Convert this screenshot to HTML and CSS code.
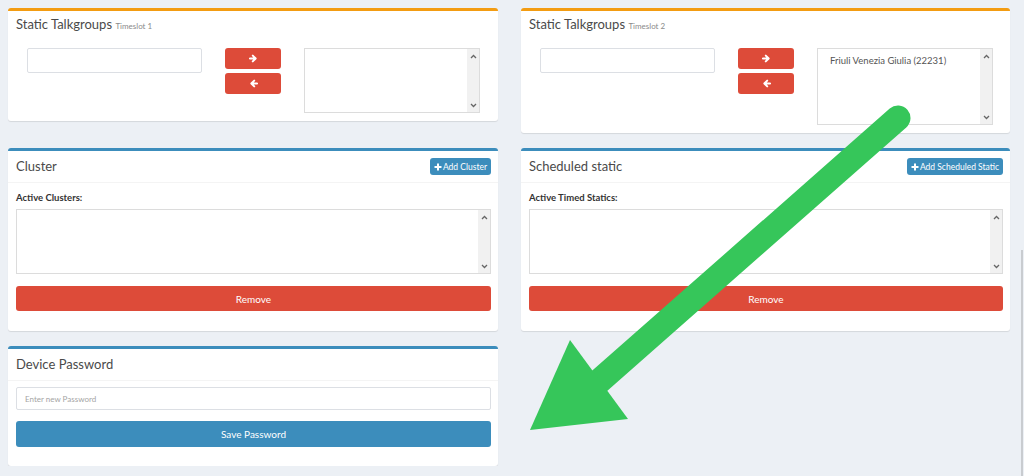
FILE: index.html
```html
<!DOCTYPE html>
<html lang="en">
<head>
	<meta charset="UTF-8">
	<title>Device settings</title>
	<link rel="stylesheet" href="styles.css">
</head>
<body>

	<div class="content">

		<div class="box box-warning">
			<div class="box-header">
				<h3 class="box-title">Static Talkgroups <small>Timeslot 1</small></h3>
			</div>
			<div class="box-body">
				<div class="tg-row">
					<input type="text" class="form-control tg-input">
					<div class="tg-buttons">
						<button class="btn btn-danger btn-arrow"><svg width="9" height="9" viewBox="0 0 10 10"><path d="M1 5h6M4.2 1.8L7.4 5 4.2 8.2" fill="none" stroke="#fff" stroke-width="2.2" stroke-linecap="round" stroke-linejoin="round"/></svg></button>
						<button class="btn btn-danger btn-arrow"><svg width="9" height="9" viewBox="0 0 10 10"><path d="M9 5H3M5.8 1.8L2.6 5l3.2 3.2" fill="none" stroke="#fff" stroke-width="2.2" stroke-linecap="round" stroke-linejoin="round"/></svg></button>
					</div>
					<div class="listbox lb-small">
						<div class="lb-items"></div>
						<div class="lb-track">
							<svg width="7" height="5" viewBox="0 0 7 5"><path d="M1 4l2.5-2.5L6 4" fill="none" stroke="#666" stroke-width="1.3"/></svg>
							<svg width="7" height="5" viewBox="0 0 7 5"><path d="M1 1l2.5 2.5L6 1" fill="none" stroke="#666" stroke-width="1.3"/></svg>
						</div>
					</div>
				</div>
			</div>
		</div>

		<div class="box box-warning">
			<div class="box-header">
				<h3 class="box-title">Static Talkgroups <small>Timeslot 2</small></h3>
			</div>
			<div class="box-body">
				<div class="tg-row">
					<input type="text" class="form-control tg-input">
					<div class="tg-buttons">
						<button class="btn btn-danger btn-arrow"><svg width="9" height="9" viewBox="0 0 10 10"><path d="M1 5h6M4.2 1.8L7.4 5 4.2 8.2" fill="none" stroke="#fff" stroke-width="2.2" stroke-linecap="round" stroke-linejoin="round"/></svg></button>
						<button class="btn btn-danger btn-arrow"><svg width="9" height="9" viewBox="0 0 10 10"><path d="M9 5H3M5.8 1.8L2.6 5l3.2 3.2" fill="none" stroke="#fff" stroke-width="2.2" stroke-linecap="round" stroke-linejoin="round"/></svg></button>
					</div>
					<div class="listbox lb-tall">
						<div class="lb-items">
							<div class="lb-option">Friuli Venezia Giulia (22231)</div>
						</div>
						<div class="lb-track">
							<svg width="7" height="5" viewBox="0 0 7 5"><path d="M1 4l2.5-2.5L6 4" fill="none" stroke="#666" stroke-width="1.3"/></svg>
							<svg width="7" height="5" viewBox="0 0 7 5"><path d="M1 1l2.5 2.5L6 1" fill="none" stroke="#666" stroke-width="1.3"/></svg>
						</div>
					</div>
				</div>
			</div>
		</div>

		<div class="box box-primary">
			<div class="box-header with-border">
				<h3 class="box-title">Cluster</h3>
				<button class="btn btn-primary btn-xs"><svg width="8" height="8" viewBox="0 0 8 8"><path d="M4 0.5v7M0.5 4h7" stroke="#fff" stroke-width="2"/></svg>Add Cluster</button>
			</div>
			<div class="box-body list-body">
				<label class="list-label">Active Clusters:</label>
				<div class="listbox lb-wide">
					<div class="lb-items"></div>
					<div class="lb-track">
						<svg width="7" height="5" viewBox="0 0 7 5"><path d="M1 4l2.5-2.5L6 4" fill="none" stroke="#666" stroke-width="1.3"/></svg>
						<svg width="7" height="5" viewBox="0 0 7 5"><path d="M1 1l2.5 2.5L6 1" fill="none" stroke="#666" stroke-width="1.3"/></svg>
					</div>
				</div>
				<button class="btn btn-danger btn-block">Remove</button>
			</div>
		</div>

		<div class="box box-primary">
			<div class="box-header with-border">
				<h3 class="box-title">Scheduled static</h3>
				<button class="btn btn-primary btn-xs"><svg width="8" height="8" viewBox="0 0 8 8"><path d="M4 0.5v7M0.5 4h7" stroke="#fff" stroke-width="2"/></svg>Add Scheduled Static</button>
			</div>
			<div class="box-body list-body">
				<label class="list-label">Active Timed Statics:</label>
				<div class="listbox lb-wide">
					<div class="lb-items"></div>
					<div class="lb-track">
						<svg width="7" height="5" viewBox="0 0 7 5"><path d="M1 4l2.5-2.5L6 4" fill="none" stroke="#666" stroke-width="1.3"/></svg>
						<svg width="7" height="5" viewBox="0 0 7 5"><path d="M1 1l2.5 2.5L6 1" fill="none" stroke="#666" stroke-width="1.3"/></svg>
					</div>
				</div>
				<button class="btn btn-danger btn-block">Remove</button>
			</div>
		</div>

		<div class="box box-primary">
			<div class="box-header with-border">
				<h3 class="box-title">Device Password</h3>
			</div>
			<div class="box-body">
				<input type="password" class="form-control pw-input" placeholder="Enter new Password">
				<button class="btn btn-primary btn-block btn-save">Save Password</button>
			</div>
		</div>

	</div>

	<div class="scroll-edge"></div>

	<!-- annotation arrow drawn over the page -->
	<svg class="annotation" width="1024" height="476" viewBox="0 0 1024 476">
		<line x1="898" y1="118" x2="596" y2="384" stroke="#36c65a" stroke-width="25" stroke-linecap="round"/>
		<polygon points="570,340 628,419 530,430" fill="#36c65a"/>
	</svg>

</body>
</html>
```

FILE: styles.css
```css
body {
	margin: 0;
	background-color: #ecf0f5;
	font-family: Lato, "Open Sans", sans-serif;
	color: #333;
	overflow: hidden;
}

.content {
	display: grid;
	grid-template-columns: 490px 489px;
	column-gap: 23px;
	row-gap: 15px;
	align-items: start;
	padding: 8px 14px 0 8px;
}

.box {
	background: #fff;
	border-top: 3px solid #d2d6de;
	border-radius: 3px;
	box-shadow: 0 1px 1px rgba(0,0,0,0.1);
}

.box-warning {
	border-top-color: #f39c12;
}

.box-primary {
	border-top-color: #3c8dbc;
}

.box-header {
	display: flex;
	align-items: center;
	justify-content: space-between;
	padding: 5px 8px 5px 8px;
	min-height: 17px;
}

.box-header.with-border {
	padding: 7px 7px 7px 8px;
	border-bottom: 1px solid #f4f4f4;
}

.box-title {
	margin: 0;
	font-size: 13px;
	font-weight: normal;
	line-height: 17px;
	color: #4a4a4a;
}

.box-title small {
	font-size: 8px;
	color: #8a8a8a;
}

.box-body {
	padding: 8px 8px 8px 8px;
}

.with-border + .box-body {
	padding: 6px 7px 19px 8px;
}

.with-border + .list-body {
	padding: 8px 7px 20px 8px;
}

/* talkgroup picker */
.tg-row {
	display: grid;
	grid-template-columns: 175px 56px 176px;
	column-gap: 23px;
	align-items: start;
	padding-left: 11px;
}

.tg-buttons {
	display: flex;
	flex-direction: column;
	gap: 4px;
}

.form-control {
	box-sizing: border-box;
	display: block;
	width: 100%;
	border: 1px solid #dcdfe4;
	border-radius: 2px;
	background: #fff;
	font-family: inherit;
	padding: 0 8px;
	margin: 0;
}

.tg-input {
	height: 25px;
}

.pw-input {
	height: 23px;
	font-size: 8px;
	color: #555;
}

.pw-input::placeholder {
	color: #a5a5a5;
}

.btn {
	border: none;
	border-radius: 3px;
	font-family: inherit;
	color: #fff;
	cursor: pointer;
	padding: 0;
}

.btn-danger {
	background-color: #dd4b39;
}

.btn-primary {
	background-color: #3c8dbc;
}

.btn-arrow {
	height: 21px;
	display: flex;
	align-items: center;
	justify-content: center;
}

.btn-xs {
	display: flex;
	align-items: center;
	gap: 1px;
	height: 17px;
	padding: 0 4px;
	font-size: 8.5px;
}

.btn-block {
	display: block;
	width: 100%;
	height: 25px;
	font-size: 10px;
}

.btn-save {
	height: 26px;
	margin-top: 11px;
}

/* list boxes with a fake scroll track */
.listbox {
	box-sizing: border-box;
	display: flex;
	border: 1px solid #dcdcdc;
	background: #fff;
}

.lb-small {
	height: 65px;
}

.lb-tall {
	height: 77px;
}

.lb-wide {
	height: 65px;
	margin-bottom: 12px;
}

.lb-items {
	flex: 1;
	padding: 6px 12px;
}

.lb-option {
	font-size: 9.5px;
	color: #555;
}

.lb-track {
	width: 12px;
	background: #f1f1f1;
	display: flex;
	flex-direction: column;
	justify-content: space-between;
	align-items: center;
	padding: 5px 0 4px;
}

.list-label {
	display: block;
	font-size: 9.5px;
	font-weight: bold;
	color: #333;
	margin: 0 0 5px;
	line-height: 13px;
}

.scroll-edge {
	position: absolute;
	right: 1px;
	top: 250px;
	bottom: 0;
	width: 2px;
	background: #c9ccd0;
}

.annotation {
	position: absolute;
	top: 0;
	left: 0;
	pointer-events: none;
}
```
